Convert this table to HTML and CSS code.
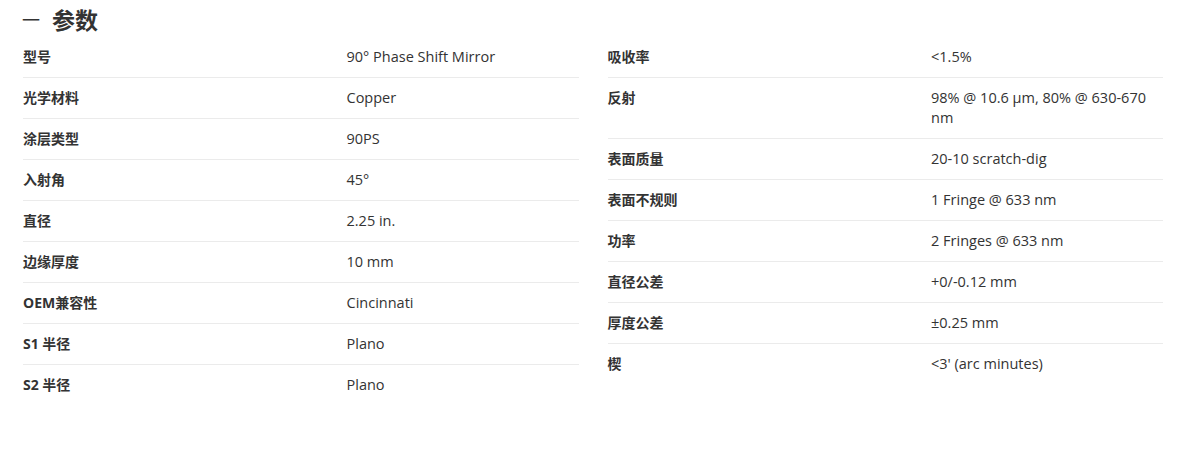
FILE: index.html
```html
<!DOCTYPE html>
<html lang="zh">
<head>
<meta charset="utf-8">
<link rel="stylesheet" href="styles.css">
</head>
<body>
<div class="page">
  <h2 class="title"><span class="dash">一</span>参数</h2>
  <div class="cols">
    <div class="col">
      <div class="row"><div class="k">型号</div><div class="v">90° Phase Shift Mirror</div></div>
      <div class="row"><div class="k">光学材料</div><div class="v">Copper</div></div>
      <div class="row"><div class="k">涂层类型</div><div class="v">90PS</div></div>
      <div class="row"><div class="k">入射角</div><div class="v">45°</div></div>
      <div class="row"><div class="k">直径</div><div class="v">2.25 in.</div></div>
      <div class="row"><div class="k">边缘厚度</div><div class="v">10 mm</div></div>
      <div class="row"><div class="k">OEM兼容性</div><div class="v">Cincinnati</div></div>
      <div class="row"><div class="k">S1 半径</div><div class="v">Plano</div></div>
      <div class="row"><div class="k">S2 半径</div><div class="v">Plano</div></div>
    </div>
    <div class="col">
      <div class="row"><div class="k">吸收率</div><div class="v">&lt;1.5%</div></div>
      <div class="row"><div class="k">反射</div><div class="v">98% @ 10.6 µm, 80% @ 630-670 nm</div></div>
      <div class="row"><div class="k">表面质量</div><div class="v">20-10 scratch-dig</div></div>
      <div class="row"><div class="k">表面不规则</div><div class="v">1 Fringe @ 633 nm</div></div>
      <div class="row"><div class="k">功率</div><div class="v">2 Fringes @ 633 nm</div></div>
      <div class="row"><div class="k">直径公差</div><div class="v">+0/-0.12 mm</div></div>
      <div class="row"><div class="k">厚度公差</div><div class="v">±0.25 mm</div></div>
      <div class="row"><div class="k">楔</div><div class="v">&lt;3' (arc minutes)</div></div>
    </div>
  </div>
</div>
</body>
</html>
```

FILE: styles.css
```css
html, body {
  margin: 0;
  padding: 0;
  background: #ffffff;
}
body {
  font-family: "Open Sans", "Noto Sans CJK SC", sans-serif;
  color: #333333;
}
.page {
  padding: 0 31px 0 23px;
}
.title {
  margin: 0;
  height: 37px;
  line-height: 34px;
  font-size: 23px;
  font-weight: 700;
  font-family: "Noto Sans CJK SC", sans-serif;
  color: #333333;
  display: flex;
  align-items: center;
}
.dash {
  font-weight: 400;
  font-size: 18px;
  margin-left: -1px;
  margin-right: 12px;
}
.cols {
  display: grid;
  grid-template-columns: 1fr 1fr;
  column-gap: 29px;
}
.row {
  display: grid;
  grid-template-columns: 323.5px 1fr;
  padding: 10px 0;
  line-height: 20px;
  border-bottom: 1px solid #ebebeb;
}
.row:last-child {
  border-bottom: none;
}
.k {
  font-family: "Open Sans", "Noto Sans CJK SC", sans-serif;
  font-weight: 700;
  font-size: 14px;
}
.v {
  font-size: 14.5px;
}
```
